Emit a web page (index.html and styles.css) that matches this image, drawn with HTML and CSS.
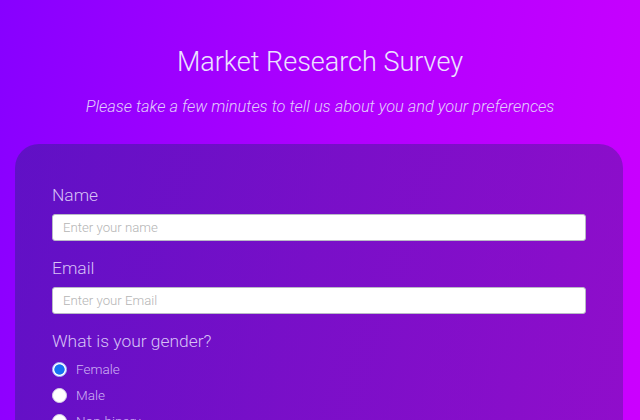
FILE: index.html
```html
<!DOCTYPE html>
<html lang="en">
<head>
<meta charset="utf-8">
<title>Market Research Survey</title>
<link rel="stylesheet" href="styles.css">
</head>
<body>
<header class="header">
  <h1 class="title">Market Research Survey</h1>
  <p class="subtitle">Please take a few minutes to tell us about you and your preferences</p>
</header>
<form class="card">
  <div class="field">
    <label class="label" for="name">Name</label>
    <input class="input" id="name" type="text" placeholder="Enter your name">
  </div>
  <div class="field">
    <label class="label" for="email">Email</label>
    <input class="input" id="email" type="email" placeholder="Enter your Email">
  </div>
  <div class="field">
    <p class="label label-group">What is your gender?</p>
    <label class="radio-row"><input class="radio" type="radio" name="gender" checked><span>Female</span></label>
    <label class="radio-row"><input class="radio" type="radio" name="gender"><span>Male</span></label>
    <label class="radio-row"><input class="radio" type="radio" name="gender"><span>Non-binary</span></label>
  </div>
</form>
</body>
</html>
```
FILE: styles.css
```css
html, body {
  margin: 0;
  padding: 0;
}
body {
  min-height: 100vh;
  background: linear-gradient(100deg, #8700ff 0%, #b000ff 50%, #cc00ff 100%);
  font-family: Roboto, "Open Sans", Arial, sans-serif;
  font-weight: 300;
  color: #e9ddff;
  overflow: hidden;
}
.header {
  text-align: center;
  padding-top: 44px;
}
.title {
  margin: 0;
  font-size: 27px;
  font-weight: 300;
  line-height: 36px;
  color: #ece2ff;
}
.subtitle {
  margin: 17px 0 0;
  font-size: 16.4px;
  font-style: italic;
  font-weight: 300;
  line-height: 20px;
  color: #e2cdfc;
}
.card {
  margin: 27px 17px 0 15px;
  padding: 40px 37px 20px;
  border-radius: 24px;
  background: linear-gradient(110deg, rgba(60, 30, 150, 0.55), rgba(75, 30, 140, 0.45));
}
.field {
  display: flex;
  flex-direction: column;
  margin-bottom: 16px;
}
.label {
  margin: 0 0 8px;
  font-size: 17.4px;
  line-height: 22px;
  font-weight: 300;
  color: #d7c2f6;
}
.label-group {
  margin-bottom: 4px;
}
.input {
  box-sizing: border-box;
  height: 27px;
  margin: 0;
  padding: 0 10px;
  border: 1px solid #b9b9c6;
  border-radius: 3px;
  background: #fff;
  font-family: Roboto, Arial, sans-serif;
  font-weight: 300;
  font-size: 13.2px;
  color: #333;
}
.input::placeholder {
  color: #b5b5b5;
}
.radio-row {
  display: flex;
  align-items: center;
  gap: 9px;
  height: 26px;
  font-size: 13.5px;
  color: #cfb3f3;
}
.radio {
  appearance: none;
  -webkit-appearance: none;
  box-sizing: border-box;
  width: 15px;
  height: 15px;
  margin: 0;
  border-radius: 50%;
  background: #fff;
  border: 1px solid #d8d2e6;
}
.radio:checked {
  border: 1px solid #a9c8ff;
  background: radial-gradient(circle, #1672f3 0 52%, #fff 60%);
}
```
